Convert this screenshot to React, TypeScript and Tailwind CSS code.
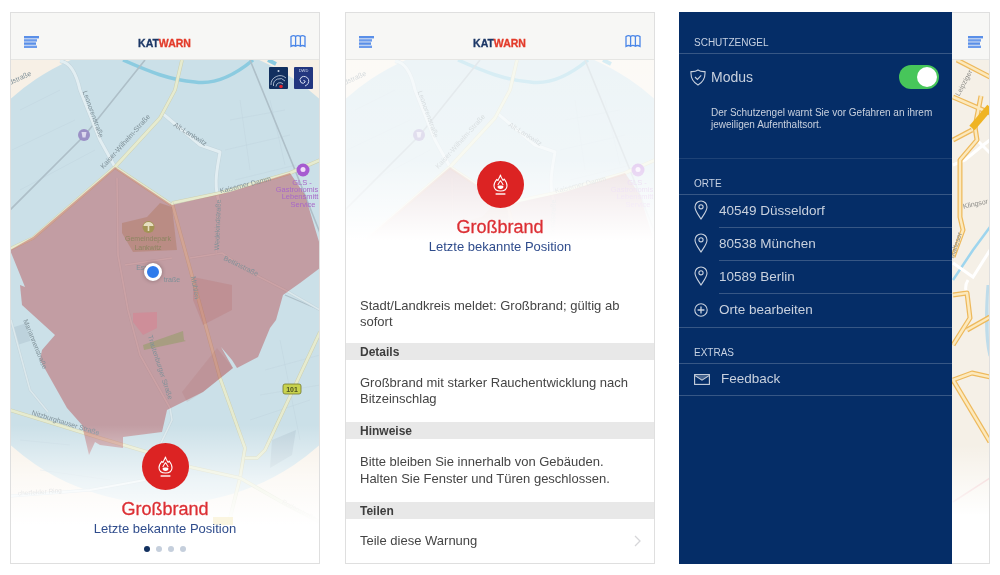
import { ReactNode } from "react";

const Hamburger = () => (
  <svg width="15" height="12" viewBox="0 0 15 12" className="block">
    <rect x="0" y="0" width="15" height="2.4" fill="#5a8fe8" />
    <rect x="0" y="3.2" width="13" height="2.4" fill="#6b9bec" />
    <rect x="0" y="6.4" width="12" height="2.4" fill="#5a8fe8" />
    <rect x="0" y="9.6" width="13" height="2.4" fill="#6b9bec" />
  </svg>
);

const MapIcon = () => (
  <svg width="16" height="14" viewBox="0 0 16 14" fill="none" stroke="#4a86e8" strokeWidth="1.3" className="block">
    <path d="M1 2.6 C2.8 1.4 4.2 1.4 5.6 2.4 C6.9 1.4 8.9 1.4 10.4 2.4 C11.8 1.4 13.2 1.4 15 2.6 V12.4 C13.2 11.2 11.8 11.2 10.4 12.2 C8.9 11.2 6.9 11.2 5.6 12.2 C4.2 11.2 2.8 11.2 1 12.4 Z" />
    <path d="M5.6 2.4 V12.2 M10.4 2.4 V12.2" />
  </svg>
);

const Logo = () => (
  <span className="text-[10.5px] font-bold leading-none [-webkit-text-stroke:0.3px]">
    <span className="text-[#1c3766]">KAT</span>
    <span className="text-[#e33b2a]">WARN</span>
  </span>
);

const Header = () => (
  <div className="h-[47px] shrink-0 bg-[#f7f7f5] border-b border-[#e6e6e3] flex items-end justify-between pl-[13px] pr-[13px] pb-[11px]">
    <Hamburger />
    <Logo />
    <MapIcon />
  </div>
);

const FireBadge = () => (
  <div className="w-[47px] h-[47px] rounded-full bg-[#dc2323] flex items-center justify-center">
    <svg width="15" height="22" viewBox="0 0 15 22" fill="none" stroke="#fff" strokeWidth="1.1" strokeLinejoin="round">
      <path d="M7.5 1 C8 3.6 9.4 4.8 10 6.4 C10.6 6 11 5.6 11.2 5 C13 7.4 14.2 9.4 14 12 C13.8 15 11.4 17 7.5 17 C3.6 17 1.2 15 1 12 C0.8 9.4 2.2 7.4 3.8 5.4 C4.2 6 4.6 6.2 5 6.4 C5.6 4.6 7 3 7.5 1 Z" />
      <path d="M7.5 6.4 C8.4 8 9.6 9.4 10.2 11.2 M7.5 6.4 C6.6 8 5.4 9.4 4.8 11.2" />
      <path d="M4.6 12.2 C5.8 11.4 9.2 11.4 10.4 12.2 C10.6 14 9.4 15 7.5 15 C5.6 15 4.4 14 4.6 12.2 Z" fill="#fff" stroke="none" />
      <path d="M2.6 20 H12.4" strokeWidth="1.4" />
    </svg>
  </div>
);

const Roads = ({ d, w = 3, color = "#e2eef2", edge = "#c2d4dc" }: { d: string; w?: number; color?: string; edge?: string }) => (
  <>
    <path d={d} fill="none" stroke={edge} strokeWidth={w + 1} strokeLinejoin="round" />
    <path d={d} fill="none" stroke={color} strokeWidth={w} strokeLinejoin="round" />
  </>
);

const Label = ({ x, y, r = 0, size = 7, fill = "#7f9098", children }: { x: number; y: number; r?: number; size?: number; fill?: string; children: ReactNode }) => (
  <text x={x} y={y} fontSize={size} fill={fill} textAnchor="middle" transform={`rotate(${r} ${x} ${y})`}>
    {children}
  </text>
);

// coordinates below are the page coordinates of the first phone
const AlertMap = ({ full }: { full: boolean }) => (
  <svg width="308" height={full ? 503 : 225} viewBox={full ? "11 60 308 503" : "11 60 308 225"} className="block">
    <defs>
      <linearGradient id="bottomFade" x1="0" y1="0" x2="0" y2="1">
        <stop offset="0" stopColor="#fff" stopOpacity="0" />
        <stop offset="0.55" stopColor="#fff" stopOpacity="0.65" />
        <stop offset="1" stopColor="#fff" stopOpacity="1" />
      </linearGradient>
    </defs>
    <rect x="0" y="0" width="340" height="580" fill="#f7f0e6" />
    <circle cx="165" cy="272" r="232" fill="#cbe0e8" />

    {/* faint block lines */}
    <path d="M20 110 L60 90 M12 150 L75 120 M20 190 L95 150 M230 120 L285 110 M225 150 L290 135 M235 180 L296 165 M240 100 L250 170 M270 100 L285 165 M40 470 L110 480 M20 440 L70 445 M250 420 L310 400 M265 370 L320 355 M260 395 L320 385 M280 340 L300 440" stroke="#c0d5de" strokeWidth="0.5" fill="none" />

    <path d="M123 60 C150 72 170 80 195 82 C215 85 235 75 253 60" fill="none" stroke="#8bcbe0" strokeWidth="3.5" />
    <path d="M268 60 L276 64" stroke="#8bcbe0" strokeWidth="4" />
    <path d="M10 210 L85 135 L145 60" fill="none" stroke="#aebfc8" strokeWidth="1.6" />
    <path d="M250 60 L295 170 L322 238" fill="none" stroke="#aebfc8" strokeWidth="1.6" />
    <path d="M285 295 L320 310" fill="none" stroke="#aebfc8" strokeWidth="1.2" />
    <rect x="16" y="325" width="12" height="18" fill="#bdd2dc" transform="rotate(-18 22 334)" />
    <path d="M272 440 L296 430 L292 455 L270 468 Z" fill="#bdd2dc" />

    <Roads d="M60 61 C70 62 76 72 80 90 L100 140 L115 167" />
    <Roads d="M162 113 L200 145 L220 152 C217 170 213 185 220 205" />
    <Roads d="M117 178 L118 255 L128 310 L140 355 L170 408 L172 420 L160 445" w={1.6} color="#dbe8ec" />
    <Roads d="M11 320 L30 390 L48 412" w={1.6} color="#dbe8ec" />
    <Roads d="M125 265 L172 258 M190 258 L222 253 L250 272 L285 290 L320 310" w={1.6} color="#dbe8ec" />
    <Roads d="M218 205 L216 255" w={1.2} color="#dbe8ec" />
    <Roads d="M10 496 L90 490 L145 480" w={2} color="#e8f2f5" />
    <Roads d="M172 203 L220 193 L290 173 L320 160" w={2.6} color="#e6ebcf" edge="#cdd0b2" />
    <Roads d="M115 167 L172 205" w={2.6} color="#e6ebcf" edge="#cdd0b2" />
    <Roads d="M10 249 L33 238 L115 167 L160 118 L175 90 L182 60" w={2.6} color="#e6ebcf" edge="#cdd0b2" />
    <Roads d="M172 203 L200 305 L220 378 L245 448 L240 478 L227 530" w={2.6} color="#e6ebcf" edge="#cdd0b2" />
    <Roads d="M320 332 L265 450 L257 458 L245 458" w={2.6} color="#e6ebcf" edge="#cdd0b2" />
    <Roads d="M10 410 L100 438 L147 452 L190 467 L240 478 L287 505 L320 522" w={2.6} color="#e6ebcf" edge="#cdd0b2" />

    <path d="M122 223 L147 217 L160 203 L172 207 L177 250 L133 252 L122 233 Z" fill="#b0a278" opacity="0.45" />

    <path
      d="M115 167 L172 205 L230 192 L290 173 L305 195 L320 245 L320 268 L300 283 L283 295 L276 320 L270 328 L258 357 L237 368 L232 360 L221 347 L233 368 L203 392 L167 410 L162 432 L123 437 L123 448 L100 445 L95 442 L89 455 L82 425 L67 408 L40 360 L42 350 L55 335 L22 305 L20 285 L25 287 L10 250 L33 237 Z"
      fill="#b43a3d"
      fillOpacity="0.4"
    />

    <g fontFamily="'Liberation Sans', sans-serif">
      <Label x={21} y={80} r={-25}>dstraße</Label>
      <Label x={91} y={115} r={70}>Leonorenstraße</Label>
      <Label x={127} y={143} r={-48}>Kaiser-Wilhelm-Straße</Label>
      <Label x={189} y={136} r={32}>Alt-Lankwitz</Label>
      <Label x={246} y={187} r={-14}>Kaiserner Damm</Label>
      <Label x={220} y={225} r={-88}>Wedekindstraße</Label>
      <Label x={240} y={268} r={26}>Bettinstraße</Label>
      <Label x={148} y={241} fill="#8d8561">Gemeindepark</Label>
      <Label x={148} y={250} fill="#8d8561">Lankwitz</Label>
      <Label x={302} y={185} size={7.5} fill="#a868c8">GLS -</Label>
      <Label x={297} y={192} size={7.5} fill="#a868c8">Gastronomis</Label>
      <Label x={300} y={199} size={7.5} fill="#a868c8">Lebensmitt</Label>
      <Label x={303} y={207} size={7.5} fill="#a868c8">Service</Label>
    </g>

    <circle cx="84" cy="135" r="6" fill="#9b90c6" />
    <path d="M81.5 132 H86.5 L85.5 137.5 H82.5 Z" fill="#dcd8ee" />
    <circle cx="303" cy="170" r="6.5" fill="#a65bd0" />
    <circle cx="303" cy="169.5" r="2.5" fill="#f0dcfa" />
    <circle cx="148.5" cy="227" r="6" fill="#a39355" />
    <path d="M143.5 226 A5 4 0 0 1 153.5 226 Z M147.7 226 H149.3 V231 H147.7 Z" fill="#e6dfc0" />

    {full && (
      <>
        <path d="M133 313 L157 312 L157 328 L143 335 L133 322 Z" fill="#d9808f" opacity="0.5" />
        <path d="M143 345 L183 331 L184 340 L186 341 L144 350 Z" fill="#9c9c72" opacity="0.7" />
        <path d="M193 277 L232 285 L232 310 L203 325 L193 300 Z" fill="#b45a52" opacity="0.18" />
        <path d="M182 392 L217 348 L233 368 L203 392 L187 402 Z" fill="#a85a55" opacity="0.12" />
        <g fontFamily="'Liberation Sans', sans-serif">
          <Label x={142} y={270}>Ess</Label>
          <Label x={172} y={282}>traße</Label>
          <Label x={193} y={288} r={80}>Mühlen</Label>
          <Label x={33} y={345} r={68}>Mariannenstraße</Label>
          <Label x={158} y={368} r={72}>Trautenburger Straße</Label>
          <Label x={65} y={425} r={17}>Nitzburghauser Straße</Label>
          <Label x={40} y={494} size={6.5} r={-4} fill="#a6a9a9">cherfelder Ring</Label>
          <Label x={298} y={512} size={6.5} r={28} fill="#c9c6bd">Rodenstraße</Label>
        </g>
        <rect x="283" y="384" width="18" height="10" rx="2" fill="#c8d24e" stroke="#73792f" strokeWidth="0.8" />
        <text x="292" y="392" fontSize="7" fontWeight="700" fill="#4d5322" textAnchor="middle" fontFamily="'Liberation Sans', sans-serif">101</text>
        <rect x="0" y="425" width="340" height="100" fill="url(#bottomFade)" />
        <rect x="0" y="524" width="340" height="60" fill="#fff" />
        <path d="M213 517 H233 V525 H213 Z" fill="#f4e9b4" opacity="0.4" />
      </>
    )}
  </svg>
);

const MapOverlays = () => (
  <div className="absolute top-[7px] right-[6px] flex gap-[6px]">
    <div className="w-[19px] h-[22px] bg-[#12305f] rounded-[1px]">
      <svg width="19" height="22" viewBox="0 0 19 22" fill="none" stroke="#c9d5e5" strokeWidth="0.8">
        <circle cx="9.5" cy="4" r="1" fill="#c9d5e5" stroke="none" />
        <path d="M2 18 A9 9 0 0 1 17 11" />
        <path d="M4.5 19 A6.5 6.5 0 0 1 16 14" />
        <path d="M7 19.5 A4 4 0 0 1 14 17" />
        <circle cx="12" cy="19.5" r="1.8" fill="#e0232e" stroke="none" />
      </svg>
    </div>
    <div className="w-[19px] h-[22px] bg-[#22367f] rounded-[1px] flex flex-col items-center">
      <span className="text-[4px] leading-[7px] text-[#d7def0]">DWD</span>
      <svg width="13" height="13" viewBox="0 0 13 13" fill="none" stroke="#d7def0" strokeWidth="1">
        <path d="M6.5 6.5 A1.6 1.6 0 0 1 8.2 8 A3 3 0 0 1 4 8.6 A4 4 0 0 1 4.6 3 A5 5 0 0 1 11.6 5.6 A5.4 5.4 0 0 1 8 12" />
      </svg>
    </div>
  </div>
);

const Caption = () => (
  <div className="flex flex-col items-center">
    <FireBadge />
    <div className="text-[18px] leading-[22px] mt-[8px] text-[#dc2f34] [-webkit-text-stroke:0.3px]">Großbrand</div>
    <div className="text-[13px] leading-[16px] mt-[1px] text-[#2f4c8c]">Letzte bekannte Position</div>
  </div>
);

const Phone = ({ children }: { children: ReactNode }) => (
  <div className="w-[310px] h-[552px] shrink-0 border border-[#dfdfdf] bg-white flex flex-col overflow-hidden">{children}</div>
);

const MapPhone = () => (
  <Phone>
    <Header />
    <div className="relative flex-1 overflow-hidden">
      <AlertMap full />
      <MapOverlays />
      <div className="absolute inset-x-0 top-[383px]">
        <Caption />
      </div>
      <div className="absolute left-[133px] top-[203px] w-[18px] h-[18px] rounded-full bg-[#2f7bec] border-[3px] border-white shadow-[0_0_4px_rgba(0,0,0,0.3)]" />
      <div className="absolute inset-x-0 bottom-[11px] flex justify-center gap-[6px]">
        <span className="w-[6px] h-[6px] rounded-full bg-[#12305f]" />
        <span className="w-[6px] h-[6px] rounded-full bg-[#c5cfdc]" />
        <span className="w-[6px] h-[6px] rounded-full bg-[#c5cfdc]" />
        <span className="w-[6px] h-[6px] rounded-full bg-[#c5cfdc]" />
      </div>
    </div>
  </Phone>
);

const Band = ({ children }: { children: ReactNode }) => (
  <div className="h-[17px] shrink-0 bg-[#e8e8e8] pl-[14px] pt-[1px] text-[12px] leading-[17px] font-bold text-[#3d3d3d]">{children}</div>
);

const Para = ({ h, children }: { h: string; children: ReactNode }) => (
  <div className={`${h} shrink-0 flex items-center pl-[14px] pr-[12px] text-[13px] leading-[16.5px] text-[#454545]`}>
    <p>{children}</p>
  </div>
);

const DetailPhone = () => (
  <Phone>
    <Header />
    <div className="relative h-[225px] shrink-0 overflow-hidden">
      <div className="absolute inset-0">
        <AlertMap full={false} />
      </div>
      <div className="absolute inset-0 bg-linear-to-b from-white/65 via-white/72 via-45% to-white to-80%" />
      <div className="relative pt-[101px]">
        <Caption />
      </div>
    </div>
    <Para h="h-[58px]">Stadt/Landkreis meldet: Großbrand; gültig ab sofort</Para>
    <Band>Details</Band>
    <Para h="h-[62px]">Großbrand mit starker Rauchentwicklung nach Bitzeinschlag</Para>
    <Band>Hinweise</Band>
    <Para h="h-[63px]">
      Bitte bleiben Sie innerhalb von Gebäuden.
      <br />
      Halten Sie Fenster und Türen geschlossen.
    </Para>
    <Band>Teilen</Band>
    <div className="flex-1 flex items-center justify-between pl-[14px] pr-[13px] text-[13px] text-[#454545]">
      <span>Teile diese Warnung</span>
      <svg width="7" height="12" viewBox="0 0 7 12" fill="none" stroke="#d6d6d9" strokeWidth="1.3">
        <path d="M1 1 L6 6 L1 11" />
      </svg>
    </div>
  </Phone>
);

const Shield = () => (
  <svg width="16" height="17" viewBox="0 0 16 17" fill="none" stroke="#c9d1de" strokeWidth="1.1">
    <path d="M8 1 C10 2.4 12.4 2.8 15 2.6 C15.4 8 13.4 13 8 16 C2.6 13 0.6 8 1 2.6 C3.6 2.8 6 2.4 8 1 Z" />
    <path d="M5 8 L7.4 10.4 L11.2 6.4" />
  </svg>
);

const Pin = () => (
  <svg width="14" height="20" viewBox="0 0 14 20" fill="none" stroke="#c9d1de" strokeWidth="1.1">
    <path d="M7 19 C4.4 14.8 1 11 1 7 A6 6 0 0 1 13 7 C13 11 9.6 14.8 7 19 Z" />
    <circle cx="7" cy="6.8" r="2.1" />
  </svg>
);

const PlusCircle = () => (
  <svg width="14" height="14" viewBox="0 0 14 14" fill="none" stroke="#c9d1de" strokeWidth="1.1">
    <circle cx="7" cy="7" r="6.2" />
    <path d="M7 3.6 V10.4 M3.6 7 H10.4" strokeWidth="1.3" />
  </svg>
);

const Mail = () => (
  <svg width="16" height="11" viewBox="0 0 16 11" fill="none" stroke="#c9d1de" strokeWidth="1.1">
    <rect x="0.6" y="0.6" width="14.8" height="9.8" />
    <path d="M0.6 1.4 H15.4 L8 6.2 Z" fill="#c9d1de" stroke="none" opacity="0.35" />
    <path d="M1 1.6 L8 6.2 L15 1.6" />
  </svg>
);

const SectionLabel = ({ h, children }: { h: string; children: ReactNode }) => (
  <div className={`${h} shrink-0 border-b border-white/20 flex items-end pl-[15px] pb-[4px] text-[10px] leading-[12px] text-[#c7d1e2]`}>
    {children}
  </div>
);

const PlaceRow = ({ name }: { name: string }) => (
  <div className="h-[33px] flex">
    <div className="w-[40px] shrink-0 flex items-center justify-center pl-[3px] pb-[3px]">
      <Pin />
    </div>
    <div className="flex-1 border-b border-white/20 flex items-center text-[13.5px] text-[#c9d1de]">{name}</div>
  </div>
);

const stripRoads = [
  "M957 60 L990 77",
  "M953 97 L990 113",
  "M953 140 L972 130",
  "M975 127 L977 140 L960 160 L960 217 L963 230 L953 257",
  "M981 96 L975 127",
  "M953 295 L967 293 L970 318 L953 345",
  "M967 330 L990 317",
  "M953 380 L972 373 L990 377",
  "M953 380 L990 442",
];

const MenuPhone = () => (
  <div className="w-[311px] h-[552px] shrink-0 flex">
    <div className="w-[273px] shrink-0 bg-[#052d67] flex flex-col">
      <SectionLabel h="h-[42px]">SCHUTZENGEL</SectionLabel>
      <div className="h-[105px] shrink-0 border-b border-white/10">
        <div className="h-[46px] flex items-center pl-[11px] pr-[13px]">
          <Shield />
          <span className="ml-[5px] flex-1 text-[14px] text-[#c9d1de]">Modus</span>
          <div className="w-[40px] h-[24px] rounded-full bg-[#47c65a] flex items-center justify-end pr-[2px]">
            <span className="w-[20px] h-[20px] rounded-full bg-white" />
          </div>
        </div>
        <p className="ml-[32px] mt-[7px] text-[10px] leading-[12px] text-[#c9d1de]">
          Der Schutzengel warnt Sie vor Gefahren an ihrem
          <br />
          jeweiligen Aufenthaltsort.
        </p>
      </div>
      <SectionLabel h="h-[36px]">ORTE</SectionLabel>
      <PlaceRow name="40549 Düsseldorf" />
      <PlaceRow name="80538 München" />
      <PlaceRow name="10589 Berlin" />
      <div className="h-[34px] shrink-0 border-b border-white/20 flex items-center">
        <div className="w-[40px] shrink-0 flex justify-center pl-[3px] pb-[2px]">
          <PlusCircle />
        </div>
        <span className="text-[13.5px] text-[#c9d1de]">Orte bearbeiten</span>
      </div>
      <SectionLabel h="h-[36px]">EXTRAS</SectionLabel>
      <div className="h-[32px] shrink-0 border-b border-white/20 flex items-center pl-[15px]">
        <Mail />
        <span className="ml-[11px] text-[13.5px] text-[#c9d1de]">Feedback</span>
      </div>
    </div>
    <div className="flex-1 border-y border-r border-[#dfdfdf] flex flex-col overflow-hidden">
      <div className="h-[47px] shrink-0 bg-[#f7f7f5] border-b border-[#e6e6e3] flex items-end pl-[16px] pb-[11px]">
        <Hamburger />
      </div>
      <svg width="37" height="503" viewBox="952 60 37 503" className="block">
        <defs>
          <linearGradient id="stripFade" x1="0" y1="0" x2="0" y2="1">
            <stop offset="0" stopColor="#fff" stopOpacity="0" />
            <stop offset="1" stopColor="#fff" stopOpacity="1" />
          </linearGradient>
        </defs>
        <rect x="952" y="60" width="38" height="504" fill="#f5f0e7" />
        <path d="M990 227 L973 250 L953 280" fill="none" stroke="#9ed5ee" strokeWidth="2.5" />
        <path d="M988 285 C986 310 986 340 990 356" fill="#cfe4ee" stroke="#bfdcea" strokeWidth="3" />
        <g fill="none" stroke="#fff" strokeWidth="3">
          <path d="M977 140 L990 153" />
          <path d="M953 165 L965 160 L982 146 L990 140" />
          <path d="M953 263 L973 277 L990 250" />
          <path d="M968 280 C964 286 966 292 967 293" />
        </g>
        <g fill="none" stroke="#eeb95c" strokeWidth="5" strokeLinejoin="round">
          {stripRoads.map((d) => (
            <path key={d} d={d} />
          ))}
        </g>
        <g fill="none" stroke="#fce9bd" strokeWidth="2.5" strokeLinejoin="round">
          {stripRoads.map((d) => (
            <path key={d} d={d} />
          ))}
        </g>
        <path d="M990 107 L972 128" stroke="#efb424" strokeWidth="7" fill="none" />
        <path d="M953 502 L990 478" stroke="#eec4c4" strokeWidth="1.5" fill="none" />
        <g fontFamily="'Liberation Sans', sans-serif" fontSize="7" fill="#8c8c88">
          <text x="966" y="84" transform="rotate(-62 966 84)" textAnchor="middle">Leipziger</text>
          <text x="976" y="206" transform="rotate(-12 976 206)" textAnchor="middle">Klingsor</text>
          <text x="958" y="246" transform="rotate(-72 958 246)" textAnchor="middle">Malteser</text>
        </g>
        <rect x="952" y="445" width="38" height="70" fill="url(#stripFade)" />
        <rect x="952" y="514" width="38" height="50" fill="#fff" />
      </svg>
    </div>
  </div>
);

const App = () => {
  return (
    <div className="w-[1000px] h-[575px] bg-white overflow-hidden pt-[12px] pl-[10px] flex font-['Liberation_Sans',sans-serif] blur-[0.35px]">
      <MapPhone />
      <div className="w-[25px] shrink-0" />
      <DetailPhone />
      <div className="w-[24px] shrink-0" />
      <MenuPhone />
    </div>
  );
};

export default App;
